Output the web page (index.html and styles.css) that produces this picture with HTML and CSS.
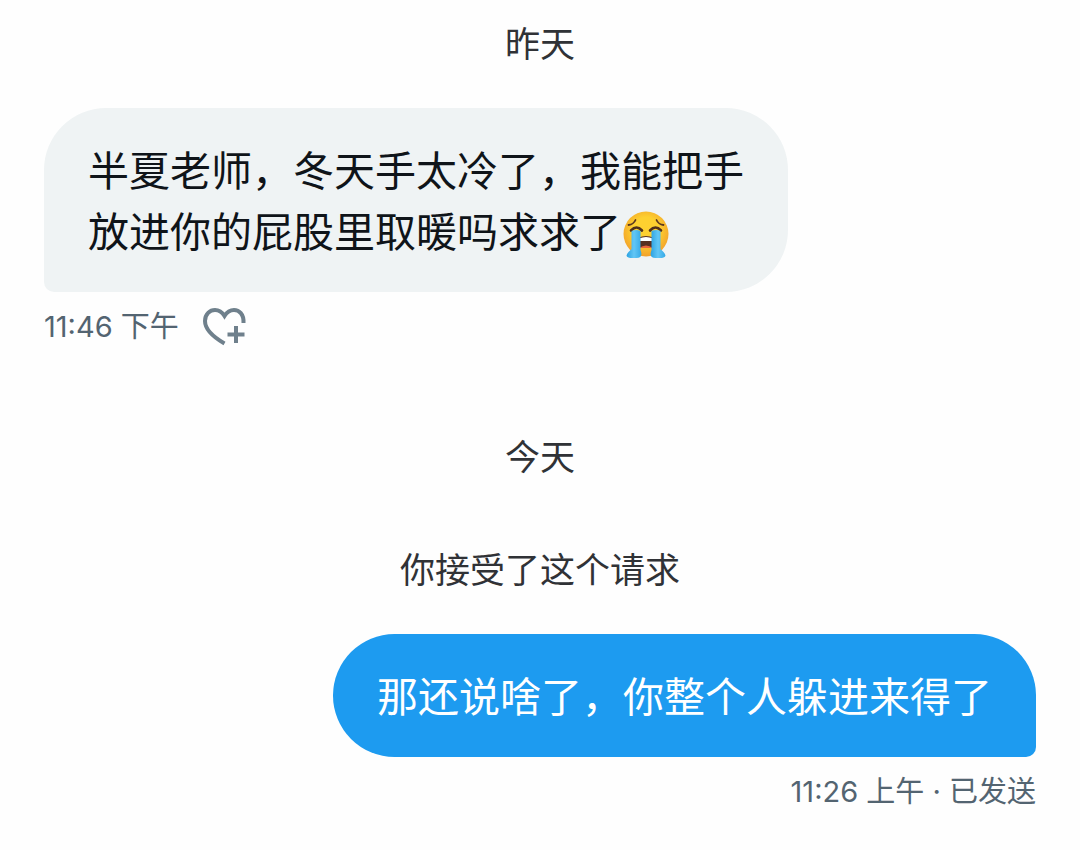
FILE: index.html
```
<!DOCTYPE html>
<html lang="zh-CN">
<head>
    <meta charset="UTF-8">
    <meta name="viewport" content="width=device-width, initial-scale=1">
    <title>私信</title>
    <link rel="stylesheet" href="styles.css">
</head>
<body>
    <main class="chat">
        <div class="notice">昨天</div>

        <section class="message">
            <p class="bubble">半夏老师，冬天手太冷了，我能把手<br>放进你的屁股里取暖吗求求了<svg class="emoji" viewBox="0 0 48 48" role="img" aria-label="大哭">
                <defs>
                    <radialGradient id="face" cx="50%" cy="42%" r="58%">
                        <stop offset="0.5" stop-color="#fdd030"/>
                        <stop offset="1" stop-color="#f2a02b"/>
                    </radialGradient>
                    <linearGradient id="tear" x1="0" x2="1" y1="0" y2="0">
                        <stop offset="0" stop-color="#2ba2e2"/>
                        <stop offset="0.5" stop-color="#62c6f5"/>
                        <stop offset="1" stop-color="#35a9e6"/>
                    </linearGradient>
                </defs>
                <circle cx="24" cy="23" r="22.5" fill="url(#face)"/>
                <path d="M6.500 14q5-.5 7-5M41.500 14q-5-.5-7-5" fill="none" stroke="#5c3820" stroke-width="1.800" stroke-linecap="round"/>
                <path d="M9 19.500q5.500-6 11 0M28 19.500q5.500-6 11 0" fill="none" stroke="#4f301c" stroke-width="2.600" stroke-linecap="round"/>
                <path d="M15 37v-6q0-6 9-6t9 6v6z" fill="#573022"/>
                <path d="M17 27.500q7-3 14 0V30H17z" fill="#fff"/>
                <path d="M17 37q7-5 14 0z" fill="#e8643c"/>
                <path d="M9.500 20q4.500-2 9 0v19q3 8-4 8H8q-6-1-1.500-6l3-3z" fill="url(#tear)"/>
                <path d="M38.500 20q-4.500-2-9 0v19q-3 8 4 8H40q6-1 1.500-6l-3-3z" fill="url(#tear)"/>
            </svg></p>
            <div class="meta">
                <time>11:46 下午</time>
                <button class="react" type="button" aria-label="添加回应">
                    <svg viewBox="0 0 44 40" fill="none" stroke="#6f808c" stroke-width="4">
                        <path d="M21.500 36.500C12 31 2 23 2 14 2 7 7 3 12 3c4 0 7 2 9.500 6C24 5 27 3 31 3c5 0 10 4 9.500 13"/>
                        <path d="M33 19v17M24.500 27.500h17"/>
                    </svg>
                </button>
            </div>
        </section>

        <div class="notice">今天</div>
        <div class="notice status">你接受了这个请求</div>

        <section class="message sent">
            <p class="bubble">那还说啥了，你整个人躲进来得了</p>
            <div class="meta"><span><time>11:26 上午</time> · 已发送</span></div>
        </section>
    </main>
</body>
</html>
```
FILE: styles.css
```
body {
    margin: 0;
    background: #fefefe;
    color: #0f1419;
    font-family: Inter, "Noto Sans CJK SC", sans-serif;
}
.chat {
    padding: 18px 44px;
}
.notice {
    color: #303236;
    font-size: 35px;
    line-height: 52px;
    text-align: center;
}
.status {
    margin-top: 61px;
}
.message {
    display: flex;
    flex-direction: column;
    align-items: flex-start;
    margin: 38px 0 69px;
}
.bubble {
    margin: 0;
    padding: 30px 44px 32px;
    border-radius: 62px 62px 62px 10px;
    background: #eff3f4;
    font-family: "Noto Sans CJK SC", sans-serif;
    font-size: 41px;
    line-height: 61px;
}
.emoji {
    width: 48px;
    height: 48px;
    margin: -8px 0 -8px 1px;
    vertical-align: -4px;
}
.meta {
    display: flex;
    align-items: center;
    gap: 24px;
    color: #536471;
    font-size: 29px;
    line-height: 70px;
}
.react {
    padding: 0;
    border: none;
    background: none;
    cursor: pointer;
}
.react svg {
    display: block;
    width: 44px;
    height: 40px;
}
.sent {
    align-items: flex-end;
    margin-bottom: 0;
}
.sent .bubble {
    border-radius: 62px 62px 10px 62px;
    background: #1d9bf0;
    color: #fff;
}
```
